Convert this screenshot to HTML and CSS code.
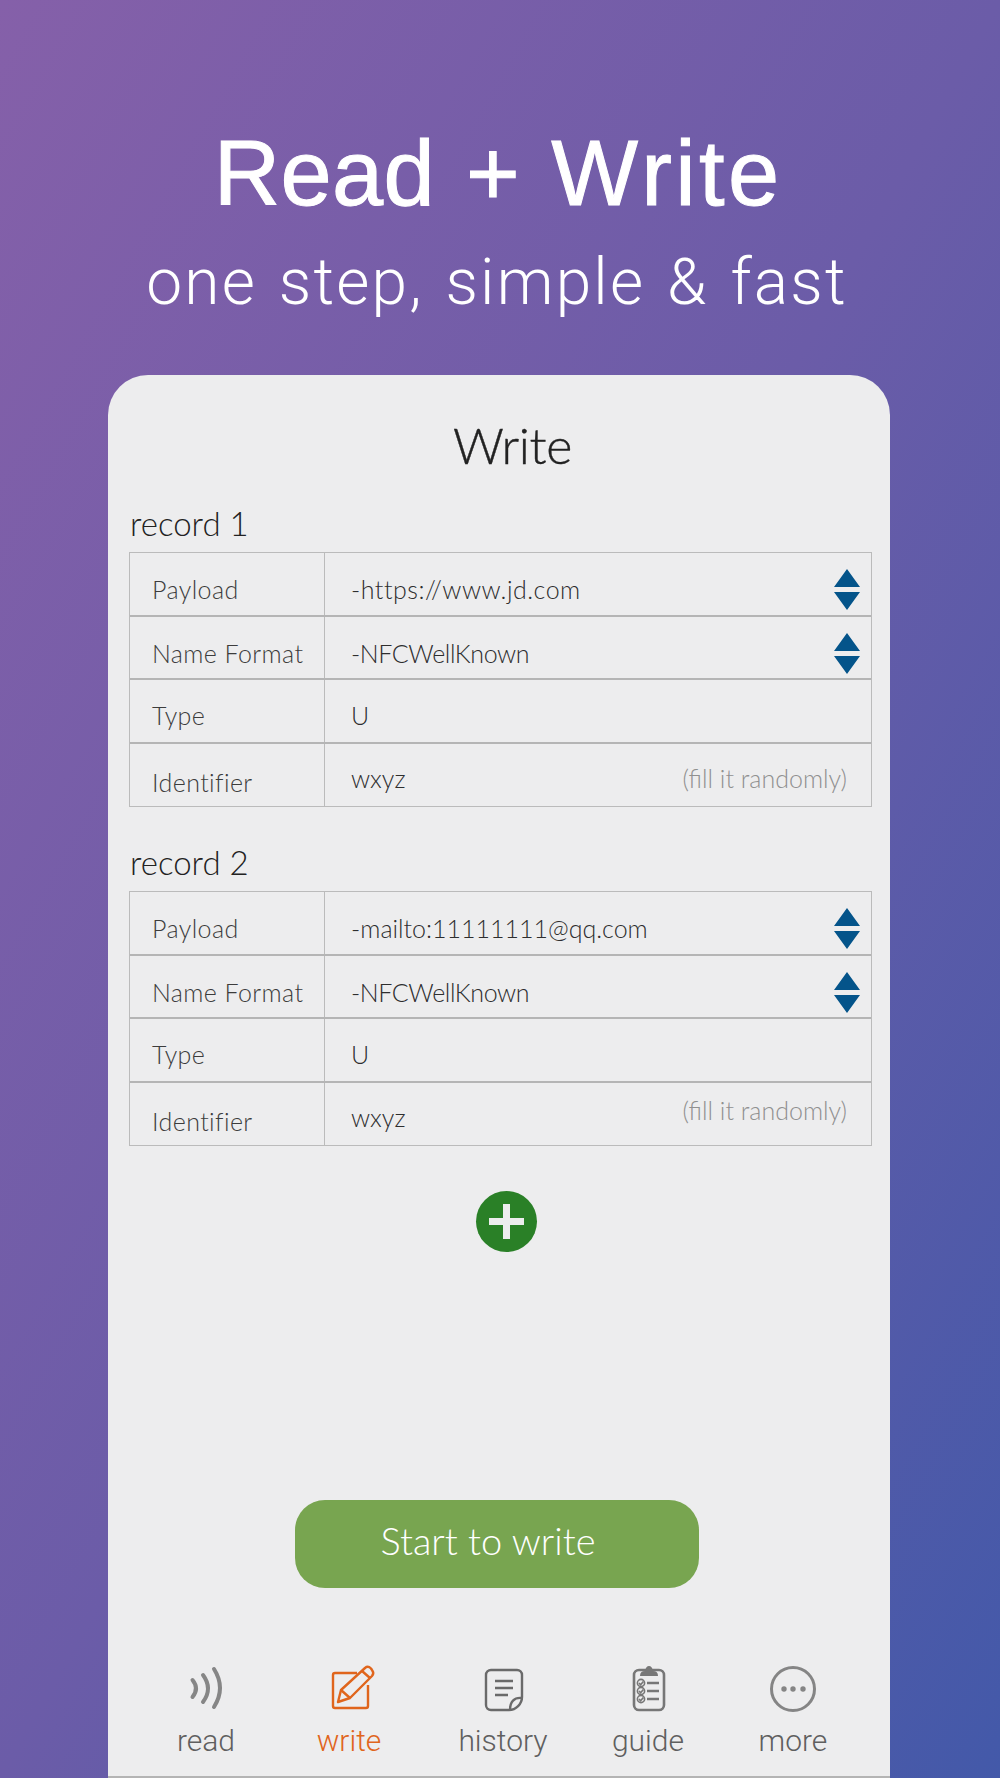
FILE: index.html
```html
<!DOCTYPE html>
<html lang="en">
<head>
    <meta charset="UTF-8">
    <meta name="viewport" content="width=device-width, initial-scale=1.0">
    <title>Read + Write</title>
    <link rel="stylesheet" href="styles.css">
</head>
<body>

    <header class="hero">
        <h1>Read + <span class="hero-write">Write</span></h1>
        <h2>one step, simple &amp; fast</h2>
    </header>

    <main class="card">
        <h3 class="card-title">Write</h3>

        <section class="record">
            <h4>record 1</h4>
            <div class="record-table">
                <div class="row">
                    <div class="label">Payload</div>
                    <div class="value"><span class="wide">-https://www.jd.com</span>
                        <svg class="stepper" viewBox="0 0 26 41"><path d="M13 0 26 18H0ZM0 23H26L13 41Z"/></svg>
                    </div>
                </div>
                <div class="row">
                    <div class="label">Name Format</div>
                    <div class="value"><span class="tight">-NFCWellKnown</span>
                        <svg class="stepper" viewBox="0 0 26 41"><path d="M13 0 26 18H0ZM0 23H26L13 41Z"/></svg>
                    </div>
                </div>
                <div class="row row-type">
                    <div class="label">Type</div>
                    <div class="value">U</div>
                </div>
                <div class="row row-id">
                    <div class="label">Identifier</div>
                    <div class="value">wxyz <span class="hint">(fill it randomly)</span></div>
                </div>
            </div>
        </section>

        <section class="record">
            <h4>record 2</h4>
            <div class="record-table">
                <div class="row">
                    <div class="label">Payload</div>
                    <div class="value">-mailto:11111111@qq.com
                        <svg class="stepper" viewBox="0 0 26 41"><path d="M13 0 26 18H0ZM0 23H26L13 41Z"/></svg>
                    </div>
                </div>
                <div class="row">
                    <div class="label">Name Format</div>
                    <div class="value"><span class="tight">-NFCWellKnown</span>
                        <svg class="stepper" viewBox="0 0 26 41"><path d="M13 0 26 18H0ZM0 23H26L13 41Z"/></svg>
                    </div>
                </div>
                <div class="row row-type">
                    <div class="label">Type</div>
                    <div class="value">U</div>
                </div>
                <div class="row row-id">
                    <div class="label">Identifier</div>
                    <div class="value">wxyz <span class="hint hint-high">(fill it randomly)</span></div>
                </div>
            </div>
        </section>

        <button type="button" class="add-btn" aria-label="Add record">
            <svg viewBox="0 0 61 61"><path d="M27 13H34V27H48V34H34V48H27V34H13V27H27Z"/></svg>
        </button>

        <button type="button" class="start-btn">Start to write</button>

        <nav class="tabs">
            <div class="tab">
                <svg viewBox="0 0 50 50" fill="none" stroke="#868686" stroke-width="4" stroke-linecap="round">
                    <path d="M11.5 16Q18.5 24.5 11.5 33"/>
                    <path d="M22 11Q32 24.5 22 38"/>
                    <path d="M33 5Q45 24 33 43"/>
                </svg>
                <span>read</span>
            </div>
            <div class="tab active">
                <svg viewBox="0 0 50 50" fill="none" stroke="#e0651c" stroke-width="2.4" stroke-linejoin="round">
                    <path d="M33 9H11a2 2 0 0 0-2 2V42a2 2 0 0 0 2 2H42a2 2 0 0 0 2-2V21"/>
                    <path d="M14 38 17 26 41 4Q44 1.5 47 4.5L48 6Q50.5 9 48 12L26 34Z"/>
                    <path d="M17 26 26 34M38 7 46 14"/>
                </svg>
                <span>write</span>
            </div>
            <div class="tab">
                <svg viewBox="0 0 50 50" fill="none" stroke="#6a6a6a" stroke-width="2.4">
                    <path d="M13 6H39a5 5 0 0 1 5 5V33C44 40 38 46 31 46H13a5 5 0 0 1-5-5V11a5 5 0 0 1 5-5Z"/>
                    <path d="M44 34C36 33 32 38 32 46"/>
                    <path d="M17 17H35M17 24H35M17 31H30"/>
                </svg>
                <span>history</span>
            </div>
            <div class="tab">
                <svg viewBox="0 0 50 50" fill="none" stroke="#777" stroke-width="2.6">
                    <rect x="11" y="6" width="30" height="40" rx="5"/>
                    <path d="M17 12Q17 7 22 7Q23 2 26 2Q29 2 30 7Q35 7 35 12Z" fill="#777" stroke="none"/>
                    <g stroke-width="1.6">
                        <circle cx="18" cy="19" r="3.6"/>
                        <circle cx="18" cy="27" r="3.6"/>
                        <circle cx="18" cy="35" r="3.6"/>
                        <path d="M16 19 17.6 20.8 20.4 17.4M16 27 17.6 28.8 20.4 25.4M16 35 17.6 36.8 20.4 33.4"/>
                    </g>
                    <path d="M24 19H36M24 27H36M24 35H36"/>
                </svg>
                <span>guide</span>
            </div>
            <div class="tab">
                <svg viewBox="0 0 50 50" fill="#858585" stroke="none">
                    <circle cx="25" cy="25" r="21.5" fill="none" stroke="#858585" stroke-width="3"/>
                    <circle cx="16" cy="25" r="2.7"/>
                    <circle cx="25" cy="25" r="2.7"/>
                    <circle cx="35" cy="25" r="2.7"/>
                </svg>
                <span>more</span>
            </div>
        </nav>
    </main>

</body>
</html>
```

FILE: styles.css
```css
/* Page */
html, body {
    margin: 0;
    padding: 0;
}

body {
    height: 1778px;
    overflow: hidden;
    display: flex;
    flex-direction: column;
    background: linear-gradient(to bottom right, #8560a9 0%, #6b5ca8 50%, #4359a9 100%);
    font-family: "Lato", "Noto Sans", sans-serif;
    font-weight: 300;
}

/* Heading above the card */
.hero {
    padding-top: 123px;
    color: #fff;
    text-align: center;
}

.hero h1 {
    margin: 0 4px 0 0;
    font-family: "Liberation Sans", Arial, sans-serif;
    font-size: 92px;
    line-height: 100px;
    font-weight: 400;
    font-kerning: none;
    letter-spacing: 0.4px;
    word-spacing: 5px;
    -webkit-text-stroke: 1px #fff;
}

.hero-write {
    letter-spacing: 3.3px;
}

.hero h2 {
    margin: 25px 6px 0 0;
    font-family: "Roboto", sans-serif;
    font-size: 64px;
    line-height: 70px;
    font-weight: 300;
    letter-spacing: 2.2px;
    word-spacing: 4px;
}

/* Card */
.card {
    flex: 1;
    box-sizing: border-box;
    width: 782px;
    margin: 57px 0 0 108px;
    padding: 40px 18px 0 21px;
    background-color: #ededee;
    border-radius: 40px 40px 0 0;
    border-bottom: 2px solid #b4b4b4;
    color: #222;
}

.card-title {
    margin: 0;
    padding-left: 24px;
    text-align: center;
    font-size: 50px;
    line-height: 60px;
    font-weight: 300;
    letter-spacing: -0.4px;
    -webkit-text-stroke: 0.4px #222;
}

/* Records */
.record {
    margin-bottom: 7px;
}

.record h4 {
    margin: 0;
    padding: 28px 0 0 1px;
    font-size: 33px;
    line-height: 40px;
    font-weight: 300;
}

.record-table {
    margin-top: 9px;
    border: 1px solid #bbb;
}

.row {
    display: grid;
    grid-template-columns: 195px 1fr;
    height: 61.5px;
    border-bottom: 2px solid #b5b5b5;
    font-size: 25px;
    line-height: 30px;
}

.row:last-child {
    height: 62.5px;
    border-bottom: 0;
}

.label {
    padding: 21px 0 0 22px;
    border-right: 1px solid #bbb;
    color: #3c3c3c;
    letter-spacing: 0.4px;
}

.value {
    display: flex;
    justify-content: space-between;
    padding: 21px 11px 0 26px;
    color: #2e2e2e;
}

.wide {
    letter-spacing: 0.5px;
}

.tight {
    letter-spacing: -0.4px;
}

.row-type .label,
.row-type .value {
    padding-top: 20px;
}

.row-id .label {
    padding-top: 23px;
}

.row-id .value {
    padding-top: 19px;
    padding-right: 24px;
}

.hint {
    color: #909090;
}

.hint-high {
    margin-top: -7px;
}

.stepper {
    width: 26px;
    height: 41px;
    margin-top: -5px;
    fill: #04548a;
}

/* Buttons */
.add-btn {
    display: block;
    width: 61px;
    height: 61px;
    margin: 45px 0 0 347px;
    padding: 0;
    border: 0;
    border-radius: 50%;
    background-color: #2a8027;
}

.add-btn svg {
    display: block;
    fill: #ededee;
}

.start-btn {
    display: block;
    box-sizing: border-box;
    width: 404px;
    height: 88px;
    margin: 248px 0 0 166px;
    padding: 0 18px 9px 0;
    border: 0;
    border-radius: 30px;
    background-color: #78a550;
    color: #fff;
    font-family: inherit;
    font-size: 38px;
    font-weight: 300;
}

/* Tab bar */
.tabs {
    display: grid;
    grid-template-columns: 144px 142px 166px 124px 166px;
    margin: 76px 0 0 5px;
}

.tab {
    display: flex;
    flex-direction: column;
    align-items: center;
    color: #5f5f5f;
    font-family: "Roboto", sans-serif;
    font-size: 30px;
    line-height: 34px;
}

.tab svg {
    width: 50px;
    height: 50px;
    overflow: visible;
    margin-bottom: 10px;
}

.tab.active {
    color: #e0651c;
}
```
